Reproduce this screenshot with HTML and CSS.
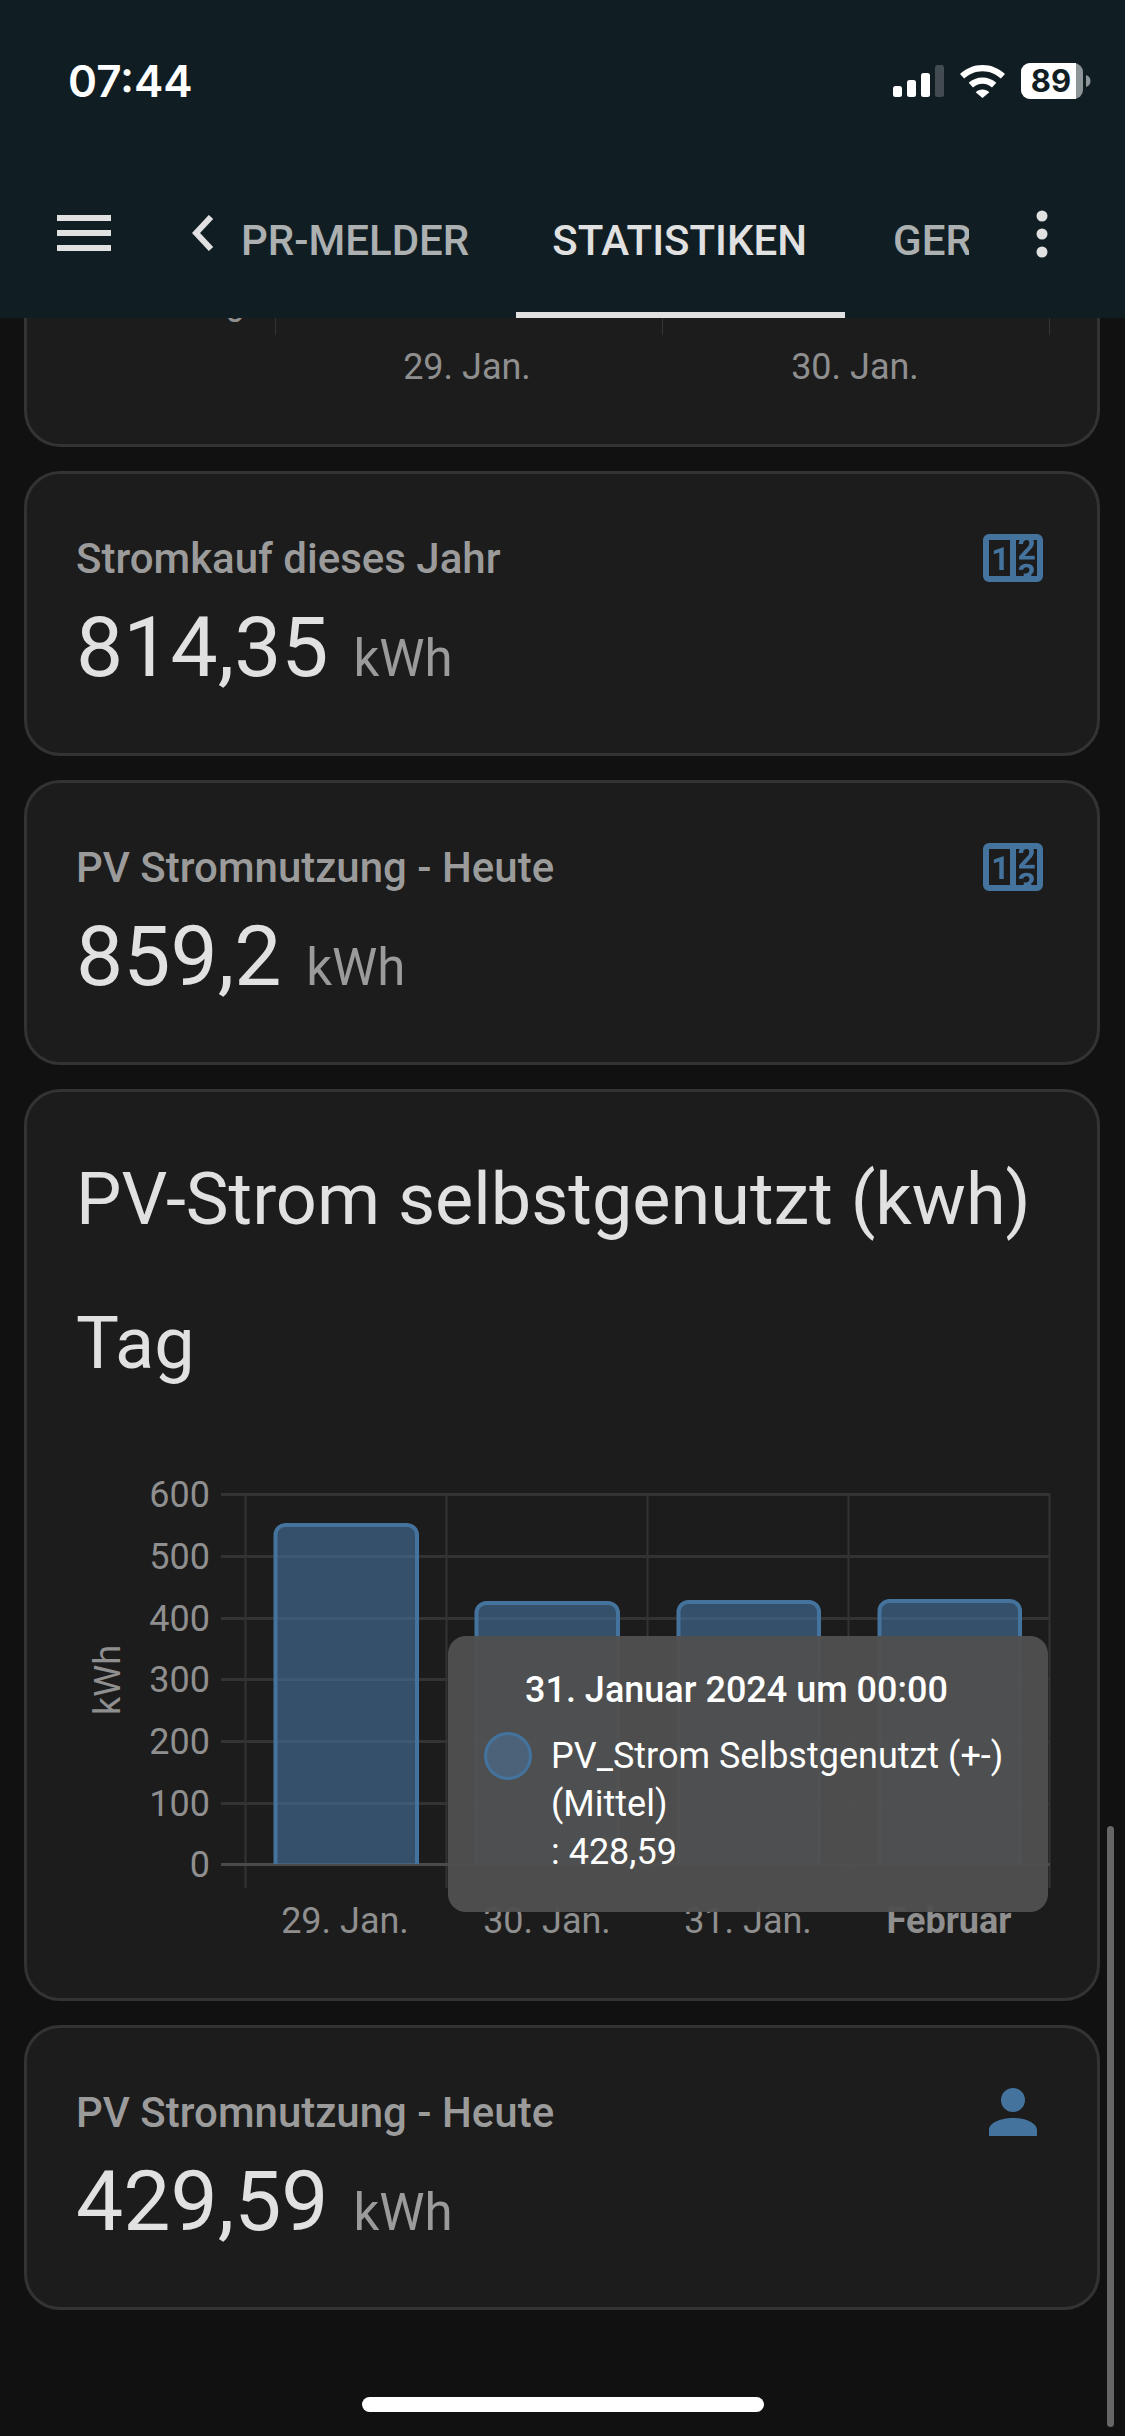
FILE: index.html
```html
<!doctype html>
<html lang="de">
  <head>
    <meta charset="utf-8">
    <title>Statistiken</title>
    <link rel="stylesheet" href="styles.css">
  </head>
  <body>
    <div class="screen">
      <header class="app-header">
        <div class="status-bar">
          <span class="clock">07:44</span>
          <div class="status-icons">
            <svg class="signal" width="51" height="32" viewBox="0 0 51 32">
              <rect x="0" y="21" width="9" height="11" rx="2.5" fill="#fff"/>
              <rect x="14" y="15" width="9" height="17" rx="2.5" fill="#fff"/>
              <rect x="28" y="8" width="9" height="24" rx="2.5" fill="#fff"/>
              <rect x="42" y="0" width="9" height="32" rx="2.5" fill="#414b50"/>
            </svg>
            <svg class="wifi" width="45" height="33" viewBox="0 0 45 33">
              <path d="M22.5 0C13.8 0 6 3.4 0 9l4.2 4.6C9.2 9 15.500 6.300 22.500 6.300S35.800 9 40.800 13.600L45 9C39 3.400 31.200 0 22.500 0Z" fill="#fff"/>
              <path d="M22.500 12.400c-5.300 0-10.100 2-13.800 5.400l4.300 4.600c2.500-2.300 5.800-3.700 9.500-3.700s7 1.400 9.500 3.700l4.300-4.600c-3.700-3.400-8.500-5.400-13.800-5.400Z" fill="#fff"/>
              <path d="M22.500 24.500c-2.600 0-5 1-6.800 2.700L22.500 33l6.800-5.800c-1.800-1.700-4.200-2.700-6.800-2.700Z" fill="#fff"/>
            </svg>
            <svg class="battery" width="70" height="36" viewBox="0 0 70 36">
              <rect x="0" y="0" width="62" height="36" rx="9" fill="#8e9599"/>
              <path d="M9 0H55V36H9A9 9 0 0 1 0 27V9A9 9 0 0 1 9 0Z" fill="#fff"/>
              <path d="M65 12C68 13 69.500 15 69.500 18S68 23 65 24Z" fill="#8e9599"/>
              <text x="30" y="29" class="battery-level">89</text>
            </svg>
          </div>
        </div>
        <div class="toolbar">
          <svg class="menu-icon" width="54" height="36" viewBox="0 0 54 36">
            <path d="M0 0H54V6H0ZM0 15H54V21H0ZM0 30H54V36H0Z" fill="#e1e1e1"/>
          </svg>
          <svg class="back-icon" width="22" height="36" viewBox="0 0 22 36">
            <path d="M19 2L4 18L19 34" fill="none" stroke="#e1e1e1" stroke-width="6"/>
          </svg>
          <nav class="tabs">
            <a class="tab tab-first">PR-MELDER</a>
            <a class="tab tab-active">STATISTIKEN</a>
            <a class="tab">GERÄTE</a>
          </nav>
          <svg class="more-icon" width="12" height="48" viewBox="0 0 12 48">
            <circle cx="6" cy="6" r="5.500" fill="#e1e1e1"/>
            <circle cx="6" cy="24" r="5.500" fill="#e1e1e1"/>
            <circle cx="6" cy="42" r="5.500" fill="#e1e1e1"/>
          </svg>
        </div>
      </header>

      <main class="cards">
        <section class="card card-cut">
          <svg class="cut-chart" width="1070" height="126" viewBox="0 0 1070 126">
            <text x="218" y="4" class="axis-label" text-anchor="end">0</text>
            <path d="M248.500 0V17M635.500 0V17M1022.500 0V17" stroke="#333"/>
            <text x="440" y="61" class="axis-label" text-anchor="middle">29. Jan.</text>
            <text x="828" y="61" class="axis-label" text-anchor="middle">30. Jan.</text>
          </svg>
        </section>

        <section class="card tile">
          <div class="tile-head">
            <span class="tile-name">Stromkauf dieses Jahr</span>
            <svg class="tile-icon" width="72" height="72" viewBox="0 0 24 24"><path d="M4,4H20A2,2 0 0,1 22,6V18A2,2 0 0,1 20,20H4A2,2 0 0,1 2,18V6A2,2 0 0,1 4,4M4,6V18H11V6H4M20,18V6H18.76C19,6.54 18.95,7.07 18.95,7.13C18.88,7.8 18.41,8.5 18.24,8.75L15.91,11.3L19.23,11.28L19.24,12.5L14.04,12.47L14,11.47C14,11.47 17.05,8.24 17.2,7.95C17.34,7.67 17.91,6 16.5,6C15.27,6.05 15.41,7.3 15.41,7.3L13.87,7.31C13.87,7.31 13.88,6.65 14.25,6H13V18H15.58L15.57,17.14L16.54,17.13C16.54,17.13 17.45,16.97 17.46,16.08C17.5,15.08 16.65,15.08 16.5,15.08C16.37,15.08 15.43,15.13 15.43,15.95H13.91C13.91,15.95 13.95,13.89 16.5,13.89C19.1,13.89 18.96,15.91 18.96,15.91C18.96,15.91 19,17.16 17.85,17.63L18.37,18H20M8.92,16H7.42V10.2L5.62,10.76V9.53L8.76,8.41H8.92V16Z"/></svg>
          </div>
          <div class="tile-value">814,35 <span class="tile-unit">kWh</span></div>
        </section>

        <section class="card tile">
          <div class="tile-head">
            <span class="tile-name">PV Stromnutzung - Heute</span>
            <svg class="tile-icon" width="72" height="72" viewBox="0 0 24 24"><path d="M4,4H20A2,2 0 0,1 22,6V18A2,2 0 0,1 20,20H4A2,2 0 0,1 2,18V6A2,2 0 0,1 4,4M4,6V18H11V6H4M20,18V6H18.76C19,6.54 18.95,7.07 18.95,7.13C18.88,7.8 18.41,8.5 18.24,8.75L15.91,11.3L19.23,11.28L19.24,12.5L14.04,12.47L14,11.47C14,11.47 17.05,8.24 17.2,7.95C17.34,7.67 17.91,6 16.5,6C15.27,6.05 15.41,7.3 15.41,7.3L13.87,7.31C13.87,7.31 13.88,6.65 14.25,6H13V18H15.58L15.57,17.14L16.54,17.13C16.54,17.13 17.45,16.97 17.46,16.08C17.5,15.08 16.65,15.08 16.5,15.08C16.37,15.08 15.43,15.13 15.43,15.95H13.91C13.91,15.95 13.95,13.89 16.5,13.89C19.1,13.89 18.96,15.91 18.96,15.91C18.96,15.91 19,17.16 17.85,17.63L18.37,18H20M8.92,16H7.42V10.2L5.62,10.76V9.53L8.76,8.41H8.92V16Z"/></svg>
          </div>
          <div class="tile-value">859,2 <span class="tile-unit">kWh</span></div>
        </section>

        <section class="card chart-card">
          <h2 class="chart-title">PV-Strom selbstgenutzt (kwh)</h2>
          <h2 class="chart-title chart-sub">Tag</h2>
          <div class="chart">
            <svg width="1070" height="480" viewBox="0 0 1070 480">
              <g class="grid">
                <path d="M194 24.500H1023M194 86.500H1023M194 148.500H1023M194 209.500H1023M194 271.500H1023M194 333.500H1023"/>
                <path d="M218.500 24V418M419.500 24V418M620.500 24V418M821.500 24V418M1022.500 24V418"/>
              </g>
              <path d="M194 394.500H1023" stroke="#4a4a4a" stroke-width="3"/>
              <path class="bar" d="M248.500 394V65a10 10 0 0 1 10-10H380a10 10 0 0 1 10 10V394"/>
              <path class="bar" d="M449.500 394V143a10 10 0 0 1 10-10H581a10 10 0 0 1 10 10V394"/>
              <path class="bar" d="M651.500 394V142a10 10 0 0 1 10-10H782a10 10 0 0 1 10 10V394"/>
              <path class="bar" d="M852.500 394V141a10 10 0 0 1 10-10H983a10 10 0 0 1 10 10V394"/>
              <g class="axis-label" text-anchor="end">
                <text x="183" y="37">600</text>
                <text x="183" y="99">500</text>
                <text x="183" y="161">400</text>
                <text x="183" y="222">300</text>
                <text x="183" y="284">200</text>
                <text x="183" y="346">100</text>
                <text x="183" y="407">0</text>
              </g>
              <text class="axis-label" text-anchor="middle" transform="translate(93 210) rotate(-90)">kWh</text>
              <g class="axis-label" text-anchor="middle">
                <text x="318" y="463">29. Jan.</text>
                <text x="520" y="463">30. Jan.</text>
                <text x="721" y="463">31. Jan.</text>
                <text x="922" y="463" class="axis-strong">Februar</text>
              </g>
            </svg>
            <div class="tooltip">
              <div class="tooltip-title">31. Januar 2024 um 00:00</div>
              <div class="tooltip-row">
                <span class="tooltip-dot"></span>
                <span class="tooltip-text">PV_Strom Selbstgenutzt (+-)<br>(Mittel)<br>: 428,59</span>
              </div>
            </div>
          </div>
        </section>

        <section class="card tile">
          <div class="tile-head">
            <span class="tile-name">PV Stromnutzung - Heute</span>
            <svg class="tile-icon" width="72" height="72" viewBox="0 0 24 24"><path d="M12,4A4,4 0 0,1 16,8A4,4 0 0,1 12,12A4,4 0 0,1 8,8A4,4 0 0,1 12,4M12,14C16.42,14 20,15.79 20,18V20H4V18C4,15.79 7.58,14 12,14Z"/></svg>
          </div>
          <div class="tile-value">429,59 <span class="tile-unit">kWh</span></div>
        </section>
      </main>

      <div class="scrollbar"></div>
      <div class="home-bar"></div>
    </div>
  </body>
</html>
```

FILE: styles.css
```css
html, body {
  margin: 0;
  padding: 0;
  background: #111;
}

* {
  box-sizing: border-box;
  font-family: Roboto, "Liberation Sans", sans-serif;
}

.screen {
  position: relative;
  width: 1125px;
  height: 2436px;
  overflow: hidden;
  background: #111;
}

/* header */
.app-header {
  height: 318px;
  background: #101e24;
  color: #e1e1e1;
}

.status-bar {
  display: flex;
  justify-content: space-between;
  align-items: center;
  height: 162px;
  padding: 0 34px 0 68px;
}

.clock {
  color: #fff;
  font-family: Inter, sans-serif;
  font-size: 44px;
  font-weight: 600;
}

.status-icons {
  display: flex;
  align-items: center;
  gap: 16px;
}

.battery-level {
  font-family: Inter, sans-serif;
  font-size: 31px;
  font-weight: 700;
  fill: #101e24;
  text-anchor: middle;
}

.toolbar {
  display: flex;
  align-items: center;
  height: 156px;
  padding-left: 57px;
}

.toolbar .menu-icon {
  flex: none;
  margin-right: 81px;
  margin-top: -14px;
}

.toolbar .back-icon {
  flex: none;
  margin-right: 27px;
  margin-top: -14px;
}

.tabs {
  display: flex;
  flex: none;
  align-self: stretch;
  width: 728px;
  overflow: hidden;
}

.tab {
  flex: none;
  padding: 55px 38px 0 36px;
  height: 156px;
  font-size: 42px;
  font-weight: 500;
  line-height: 48px;
  color: rgba(225, 225, 225, 0.75);
}

.tab-first {
  padding-left: 0;
  padding-right: 47px;
}

.tab-active {
  color: #e1e1e1;
  border-bottom: 6px solid #e1e1e1;
}

.tab + .tab-active + .tab {
  margin-left: 12px;
}

.more-icon {
  flex: none;
  margin-left: 67px;
  margin-top: -12px;
}

/* cards */
.cards {
  display: flex;
  flex-direction: column;
  gap: 24px;
  padding: 0 25px 0 24px;
}

.card {
  background: #1c1c1c;
  border: 3px solid #333;
  border-radius: 36px;
}

.card-cut {
  height: 129px;
  border-top: 0;
  border-top-left-radius: 0;
  border-top-right-radius: 0;
}

.cut-chart {
  display: block;
}

.tile {
  height: 285px;
  padding: 48px 48px 0 49px;
}

.tile-head {
  display: flex;
  justify-content: space-between;
  height: 72px;
  align-items: center;
}

.tile-name {
  color: #9b9b9b;
  font-size: 42px;
  font-weight: 500;
}

.tile-icon {
  fill: #44739e;
  flex: none;
}

.tile-value {
  margin-top: 6px;
  color: #e1e1e1;
  font-size: 84px;
  line-height: 96px;
  font-weight: 400;
}

.tile-unit {
  margin-left: 4px;
  color: #9b9b9b;
  font-size: 51px;
}

/* chart card */
.chart-card {
  height: 912px;
  padding-top: 60px;
}

.chart-title {
  margin: 0;
  padding-left: 49px;
  color: #e1e1e1;
  font-size: 72px;
  font-weight: 400;
  line-height: 96px;
}

.chart-sub {
  margin-top: 48px;
}

.chart {
  position: relative;
  margin-top: 78px;
}

.chart svg {
  display: block;
}

.grid path {
  stroke: #333;
  stroke-width: 3;
  fill: none;
}

.grid path + path {
  stroke-width: 2;
}

.bar {
  fill: rgba(68, 115, 158, 0.6);
  stroke: #44739e;
  stroke-width: 4;
}

.axis-label {
  fill: #8f8f8f;
  font-size: 36px;
}

.axis-strong {
  font-weight: 700;
}

.tooltip {
  position: absolute;
  left: 421px;
  top: 166px;
  width: 600px;
  height: 276px;
  padding: 30px 24px 0 36px;
  background: rgba(80, 80, 80, 0.97);
  border-radius: 18px;
  color: #fff;
  font-size: 36px;
  line-height: 48px;
}

.tooltip-title {
  font-weight: 500;
  margin-left: 41px;
  margin-bottom: 18px;
}

.tooltip-row {
  display: flex;
  gap: 19px;
}

.tooltip-dot {
  flex: none;
  width: 48px;
  height: 48px;
  margin-left: 0;
  background: #4b6278;
  border: 3px solid #44739e;
  border-radius: 50%;
}

.tooltip-text {
  white-space: nowrap;
}

/* overlays */
.scrollbar {
  position: absolute;
  left: 1107px;
  top: 1826px;
  width: 7px;
  height: 601px;
  background: #666;
  border-radius: 4px;
}

.home-bar {
  position: absolute;
  left: 362px;
  top: 2397px;
  width: 402px;
  height: 15px;
  background: #fff;
  border-radius: 8px;
}
```
